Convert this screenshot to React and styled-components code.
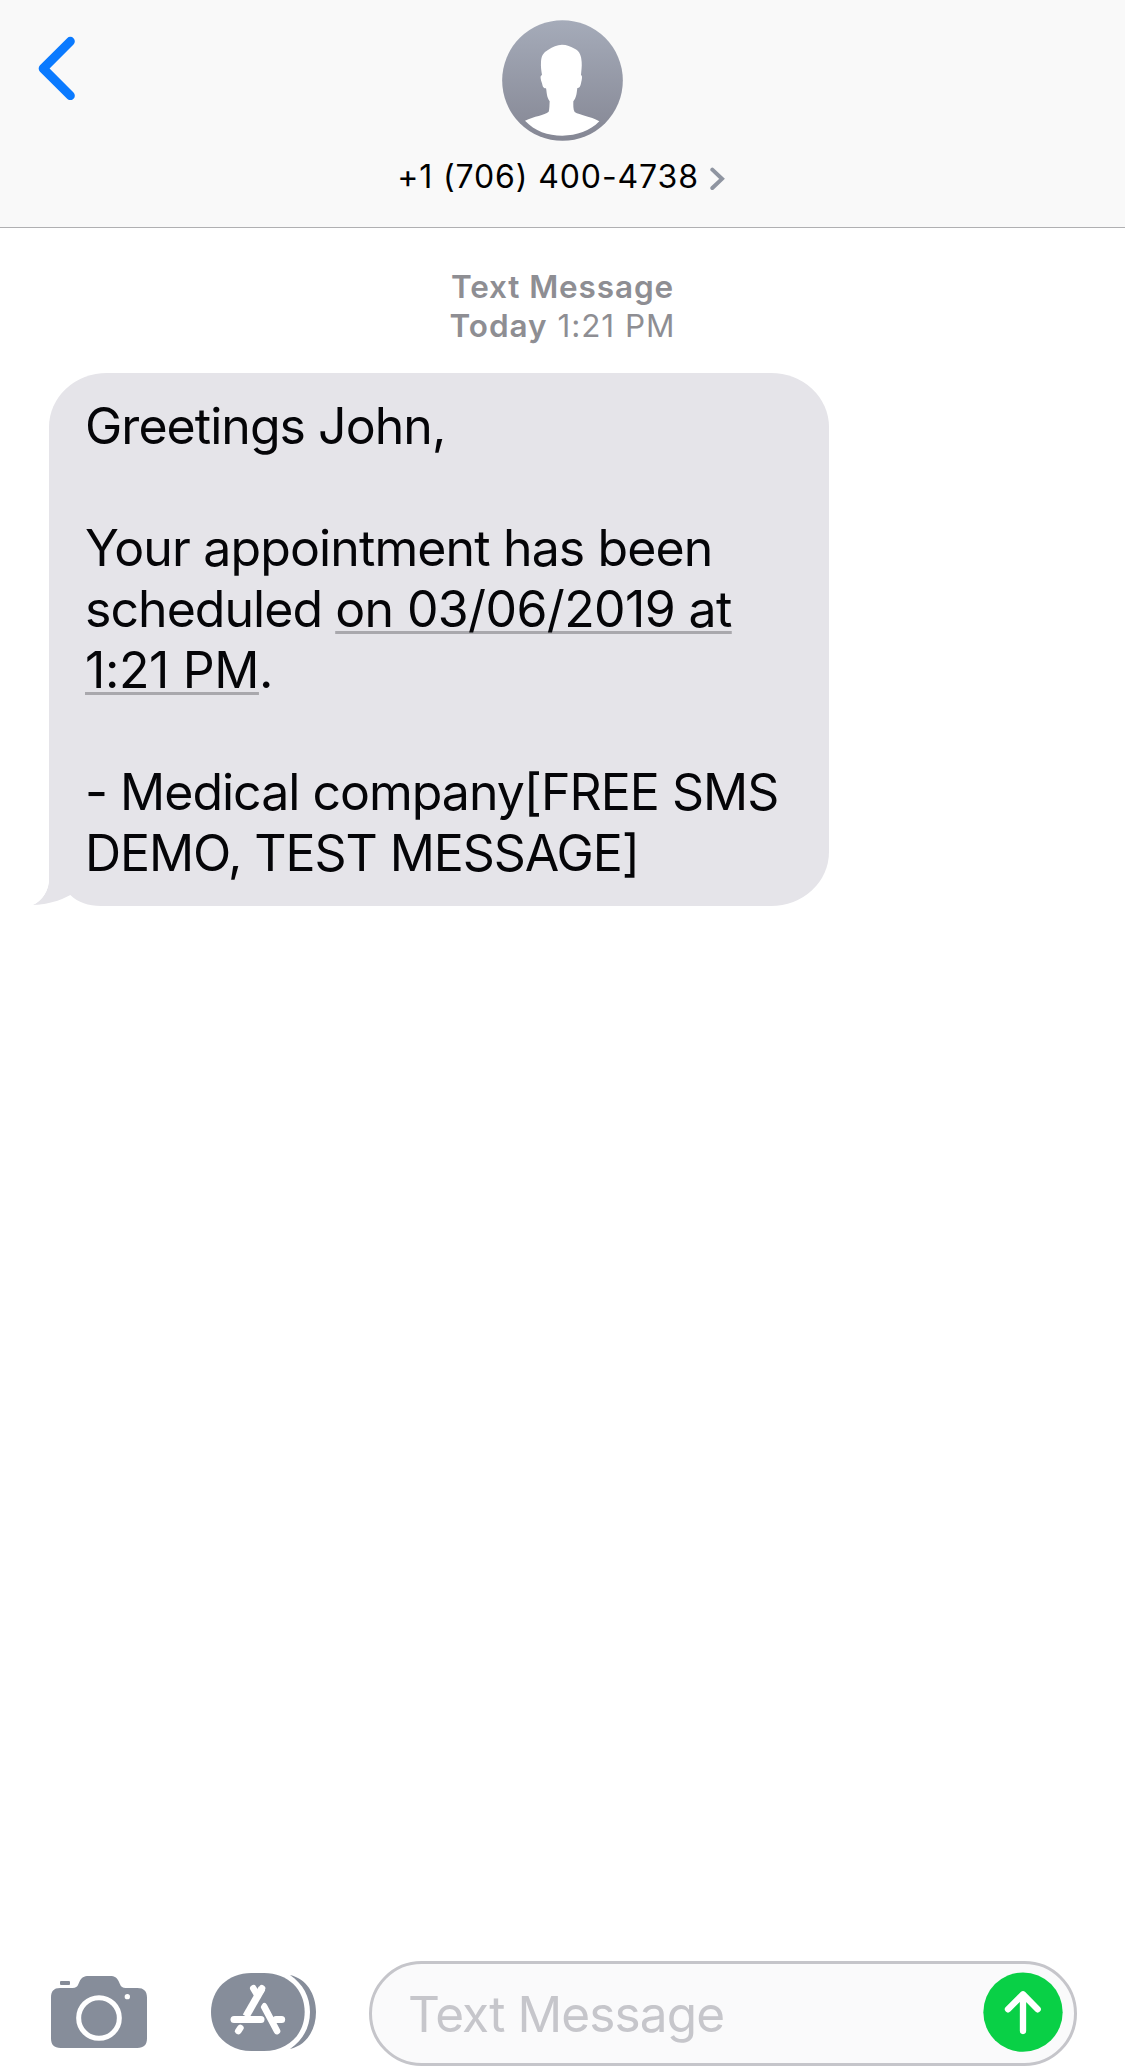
import React from "react";
import styled, { createGlobalStyle } from "styled-components";

const GlobalStyle = createGlobalStyle`
  * { box-sizing: border-box; }
  body { margin: 0; background: #fff; }
  button { border: 0; padding: 0; background: none; display: block; }
  svg { display: block; }
`;

const Screen = styled.div`
  display: flex;
  flex-direction: column;
  width: 1125px;
  height: 2070px;
  background: #fff;
  overflow: hidden;
  font-family: Inter, "Liberation Sans", sans-serif;
  color: #000;
`;

const Header = styled.header`
  display: grid;
  grid-template-columns: 200px 1fr 200px;
  height: 228px;
  flex: none;
  background: #f9f9f9;
  border-bottom: 1px solid #b0b0b2;
`;

const BackButton = styled.button`
  align-self: start;
  justify-self: start;
  margin: 36px 0 0 38px;
`;

const Contact = styled.div`
  display: flex;
  flex-direction: column;
  align-items: center;
  padding-top: 20px;
`;

const ContactName = styled.div`
  display: flex;
  align-items: center;
  gap: 11px;
  margin-top: 16px;
  padding-right: 3px;
  font-size: 32px;
  line-height: 40px;
  letter-spacing: ${(p) => p.$track}px;
  white-space: nowrap;

  svg {
    margin-top: 4px;
  }
`;

const Thread = styled.main`
  flex: 1;
  display: flex;
  flex-direction: column;
  align-items: flex-start;
  padding: 39px 49px 0;
`;

const Stamp = styled.div`
  align-self: center;
  display: flex;
  flex-direction: column;
  align-items: center;
  margin-bottom: 28px;
  color: #8e8e93;
  font-size: 31.5px;
  line-height: 39px;
`;

const StampLine = styled.div`
  letter-spacing: ${(p) => p.$track}px;
  white-space: nowrap;
`;

const Strong = styled.span`
  font-weight: 600;
`;

const Bubble = styled.div`
  position: relative;
  width: 780px;
  height: 533px;
  padding: 23px 36px 0;
  border-radius: 58px 58px 58px 0 / 54px 54px 54px 0;
  background: #e5e4e9;
`;

const Tail = styled.svg`
  position: absolute;
  left: -17px;
  bottom: 0;
`;

const Line = styled.div`
  position: relative;
  height: 61px;
  font-size: 50px;
  line-height: 61px;
  letter-spacing: ${(p) => p.$track || 0}px;
  white-space: nowrap;
  color: #050508;
`;

const DateLink = styled.span`
  letter-spacing: ${(p) => p.$track}px;
  text-decoration: underline;
  text-decoration-color: #a9a8ad;
  text-decoration-thickness: 3px;
  text-underline-offset: 4px;
  text-decoration-skip-ink: none;
`;

const Composer = styled.footer`
  display: flex;
  align-items: center;
  padding: 0 48px 4px 50px;
  flex: none;
`;

const ToolButton = styled.button`
  margin: 0 ${(p) => p.$gap}px 3px 0;
`;

const Field = styled.div`
  flex: 1;
  display: flex;
  align-items: center;
  justify-content: space-between;
  height: 105px;
  padding: 0 11px 0 36px;
  border: 3px solid #c5c5ca;
  border-radius: 53px;
  background: #fafafb;
`;

const Placeholder = styled.span`
  font-size: 49.5px;
  line-height: 60px;
  letter-spacing: ${(p) => p.$track}px;
  color: #c6c6cb;
`;

const SendButton = styled.button`
  margin-bottom: 3px;
`;

function BackIcon() {
  return (
    <svg width="38" height="64" viewBox="114 108 114 192" fill="none">
      <path d="M211 124L129.500 205.500L211 287" stroke="#0a7aff" strokeWidth="27" strokeLinecap="round" strokeLinejoin="round" />
    </svg>
  );
}

function Avatar() {
  return (
    <svg width="121" height="121" viewBox="366 60 363 363">
      <defs>
        <linearGradient id="avatar" x1="0" y1="0" x2="0" y2="1">
          <stop offset="0" stopColor="#a5abb9" />
          <stop offset="1" stopColor="#858794" />
        </linearGradient>
      </defs>
      <circle cx="547.500" cy="241.500" r="181" fill="url(#avatar)" />
      <path
        fill="#fff"
        d="M546 134C560 134 573 140 584 146C600 154 604 168 605 186C606 200 604 212 603 225C608 227 606 238 603 250C601 258 600 265 592 264C590 278 590 292 580 304C580 316 579 328 584 336C600 346 630 348 658 364C630 393 590 407 547 407C504 407 464 393 435 362C462 348 494 346 506 335C509 326 508 316 509 304C499 290 501 278 498 265C489 266 488 258 486 250C482 238 479 227 486 225C484 212 482 200 483 186C484 168 489 158 505 149C518 141 531 134 546 134Z"
      />
    </svg>
  );
}

function DetailChevron() {
  return (
    <svg width="15" height="24" viewBox="987 501 45 72" fill="none">
      <path d="M994 509L1023 536.500L994 564" stroke="#8f95a1" strokeWidth="12" strokeLinecap="round" />
    </svg>
  );
}

function CameraIcon() {
  return (
    <svg width="98" height="74" viewBox="60 75 294 222">
      <rect x="90" y="93" width="30" height="12" rx="3" fill="#868c98" />
      <path
        fill="#868d9a"
        d="M90 114H128C137 114 142 111 145 103L149 94C154 83 162 78 176 78H240C254 78 261 83 266 94L270 103C273 111 278 114 287 114H322C342 114 351 124 351 143V265C351 285 342 294 322 294H92C72 294 63 285 63 265V143C63 124 71 114 90 114Z"
      />
      <circle cx="207" cy="204" r="61" fill="none" stroke="#fff" strokeWidth="15" />
      <circle cx="292" cy="140" r="8" fill="#fff" />
    </svg>
  );
}

function AppsIcon() {
  return (
    <svg width="107" height="80" viewBox="540 66 321 240">
      <path fill="#868d9a" d="M780 75C829 86 858 132 858 186C858 240 829 286 780 297C819 270 840 232 840 186C840 140 819 102 780 75Z" />
      <path fill="#868d9a" d="M664 69H702C774 69 824 119 824 186C824 253 774 303 702 303H664C593 303 543 253 543 186C543 119 593 69 664 69Z" />
      <g stroke="#fff" strokeWidth="20" strokeLinecap="round" fill="none">
        <path d="M670 115L683 137" />
        <path d="M696 115L648 199" strokeWidth="22" strokeLinecap="butt" />
        <path d="M696 115L690 126" />
        <path d="M612 208.500H693" strokeWidth="21" />
        <path d="M738 208.500H755" strokeWidth="21" />
        <path d="M702 169L741 243" />
        <path d="M631 234L625 243" />
      </g>
      <path d="M707 140L688 173" stroke="#868d9a" strokeWidth="5" fill="none" />
    </svg>
  );
}

function SendIcon() {
  return (
    <svg width="80" height="80" viewBox="131 95 240 240" fill="none">
      <circle cx="251" cy="215.500" r="119" fill="#09d046" />
      <path d="M251 272V163M206 207L251 162L295 207" stroke="#fff" strokeWidth="19" strokeLinecap="round" strokeLinejoin="round" />
    </svg>
  );
}

export default function App() {
  return (
    <Screen>
      <GlobalStyle />
      <Header>
        <BackButton aria-label="Back">
          <BackIcon />
        </BackButton>
        <Contact>
          <Avatar />
          <ContactName $track={0.88}>
            <span>+1 (706) 400-4738</span>
            <DetailChevron />
          </ContactName>
        </Contact>
      </Header>
      <Thread>
        <Stamp>
          <StampLine $track={0.87}>
            <Strong>Text Message</Strong>
          </StampLine>
          <StampLine $track={0.95}>
            <Strong>Today</Strong> 1:21 PM
          </StampLine>
        </Stamp>
        <Bubble>
          <Tail width="68.670" height="56" viewBox="36 510 206 168">
            <path d="M86 510H242V678C205 678 175 668 151 645C120 664 80 676 37 676C67 662 88 632 88 590Z" fill="#e5e4e9" />
            <path d="M32 510H87V594C87 634 67 662 37 675C80 675 120 662 151 645C175 668 205 678 242 678H32Z" fill="#fff" />
          </Tail>
          <Line $track={-0.96}>Greetings John,</Line>
          <Line />
          <Line $track={-0.87}>Your appointment has been</Line>
          <Line $track={-0.96}>
            scheduled <DateLink $track={-0.62}>on 03/06/2019 at</DateLink>
          </Line>
          <Line $track={-0.4}>
            <DateLink $track={-0.4}>1:21 PM</DateLink>.
          </Line>
          <Line />
          <Line $track={-1}>- Medical company[FREE SMS</Line>
          <Line $track={-1.08}>DEMO, TEST MESSAGE]</Line>
        </Bubble>
      </Thread>
      <Composer>
        <ToolButton $gap={62} aria-label="Camera">
          <CameraIcon />
        </ToolButton>
        <ToolButton $gap={52} aria-label="Apps">
          <AppsIcon />
        </ToolButton>
        <Field>
          <Placeholder $track={-0.88}>Text Message</Placeholder>
          <SendButton aria-label="Send">
            <SendIcon />
          </SendButton>
        </Field>
      </Composer>
    </Screen>
  );
}
